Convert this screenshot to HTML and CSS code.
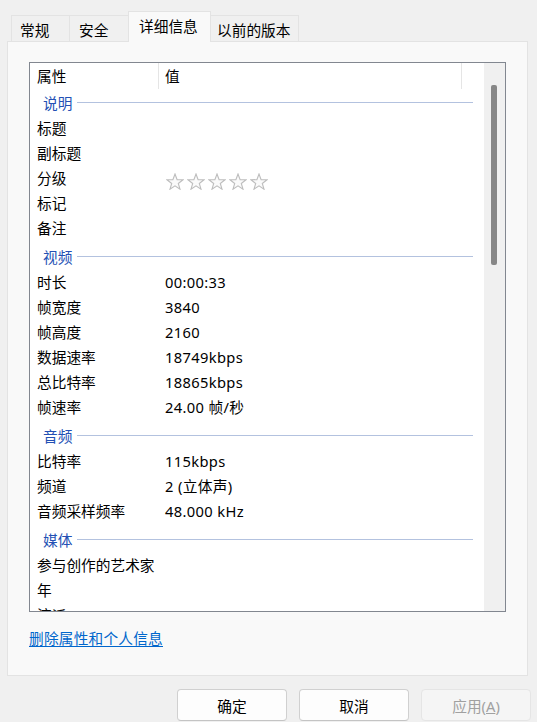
FILE: index.html
```html
<!DOCTYPE html>
<html lang="zh-CN">
<head>
<meta charset="utf-8">
<title>属性</title>
<link rel="stylesheet" href="styles.css">
</head>
<body>
<div class="dialog">
  <div class="tabs">
    <div class="tab t1">常规</div>
    <div class="tab t2">安全</div>
    <div class="tab t3 active">详细信息</div>
    <div class="tab t4">以前的版本</div>
  </div>
  <div class="panel">
    <div class="listbox">
      <div class="list">
        <div class="header">
          <div class="hcell hprop">属性</div>
          <div class="hcell hval">值</div>
        </div>
        <div class="section first"><span class="stitle">说明</span><span class="sline"></span></div>
        <div class="row"><span class="prop">标题</span><span class="val"></span></div>
        <div class="row"><span class="prop">副标题</span><span class="val"></span></div>
        <div class="row"><span class="prop">分级</span><span class="val stars">
          <svg class="star" viewBox="0 0 18 17"><polygon points="9,1 11.1,6.6 17,6.8 12.3,10.5 14,16.2 9,12.9 4,16.2 5.7,10.5 1,6.8 6.9,6.6"/></svg>
          <svg class="star" viewBox="0 0 18 17"><polygon points="9,1 11.1,6.6 17,6.8 12.3,10.5 14,16.2 9,12.9 4,16.2 5.7,10.5 1,6.8 6.9,6.6"/></svg>
          <svg class="star" viewBox="0 0 18 17"><polygon points="9,1 11.1,6.6 17,6.8 12.3,10.5 14,16.2 9,12.9 4,16.2 5.7,10.5 1,6.8 6.9,6.6"/></svg>
          <svg class="star" viewBox="0 0 18 17"><polygon points="9,1 11.1,6.6 17,6.8 12.3,10.5 14,16.2 9,12.9 4,16.2 5.7,10.5 1,6.8 6.9,6.6"/></svg>
          <svg class="star" viewBox="0 0 18 17"><polygon points="9,1 11.1,6.6 17,6.8 12.3,10.5 14,16.2 9,12.9 4,16.2 5.7,10.5 1,6.8 6.9,6.6"/></svg>
        </span></div>
        <div class="row"><span class="prop">标记</span><span class="val"></span></div>
        <div class="row"><span class="prop">备注</span><span class="val"></span></div>
        <div class="section"><span class="stitle">视频</span><span class="sline"></span></div>
        <div class="row"><span class="prop">时长</span><span class="val">00:00:33</span></div>
        <div class="row"><span class="prop">帧宽度</span><span class="val">3840</span></div>
        <div class="row"><span class="prop">帧高度</span><span class="val">2160</span></div>
        <div class="row"><span class="prop">数据速率</span><span class="val">18749kbps</span></div>
        <div class="row"><span class="prop">总比特率</span><span class="val">18865kbps</span></div>
        <div class="row"><span class="prop">帧速率</span><span class="val">24.00 帧/秒</span></div>
        <div class="section"><span class="stitle">音频</span><span class="sline"></span></div>
        <div class="row"><span class="prop">比特率</span><span class="val">115kbps</span></div>
        <div class="row"><span class="prop">频道</span><span class="val">2 (立体声)</span></div>
        <div class="row"><span class="prop">音频采样频率</span><span class="val">48.000 kHz</span></div>
        <div class="section"><span class="stitle">媒体</span><span class="sline"></span></div>
        <div class="row"><span class="prop">参与创作的艺术家</span><span class="val"></span></div>
        <div class="row"><span class="prop">年</span><span class="val"></span></div>
        <div class="row"><span class="prop">流派</span><span class="val"></span></div>
      </div>
      <div class="scrollbar"><div class="thumb"></div></div>
    </div>
    <a class="link" href="#">删除属性和个人信息</a>
  </div>
  <div class="buttons">
    <button class="btn">确定</button>
    <button class="btn">取消</button>
    <button class="btn disabled" disabled>应用(<u>A</u>)</button>
  </div>
</div>
</body>
</html>
```
FILE: styles.css
```css
* { box-sizing: border-box; }
html, body {
  margin: 0;
  padding: 0;
  background: #f0f0f0;
}
body {
  font-family: "Noto Sans", "Noto Sans CJK SC", sans-serif;
  font-size: 14.7px;
  color: #000;
  width: 537px;
  height: 722px;
  overflow: hidden;
}
.dialog {
  display: flex;
  flex-direction: column;
}
.tabs {
  display: flex;
  align-items: flex-end;
  height: 41px;
  padding-left: 11px;
}
.tab {
  height: 26px;
  line-height: 24px;
  padding-top: 2px;
  border: 1px solid #e3e3e3;
  border-bottom: none;
  background: #f0f0f0;
  white-space: nowrap;
}
.t1 { width: 59px; padding-left: 8px; }
.t2 { width: 60px; padding-left: 9px; margin-left: -1px; }
.t3 { width: 83px; padding-left: 10px; margin-left: -1px; }
.t4 { width: 89px; padding-left: 6px; margin-left: -1px; }
.tab.active {
  height: 31px;
  line-height: 28px;
  padding-top: 0;
  background: #f9f9f9;
  margin-bottom: -1px;
  position: relative;
  z-index: 1;
}
.panel {
  margin-left: 7px;
  width: 521px;
  height: 635px;
  border: 1px solid #e3e3e3;
  background: #f9f9f9;
  padding: 20px 0 0 21px;
  display: flex;
  flex-direction: column;
  align-items: flex-start;
}
.listbox {
  width: 477px;
  height: 550px;
  border: 1px solid #828790;
  background: #fff;
  display: flex;
}
.list {
  flex: 1;
  overflow: hidden;
}
.header {
  display: flex;
  height: 26px;
}
.hcell {
  height: 26px;
  line-height: 26px;
  border-right: 1px solid #e5e5e5;
}
.hprop { width: 129px; padding-left: 7px; }
.hval { width: 303px; padding-left: 6px; }
.section {
  display: flex;
  align-items: center;
  height: 29px;
  padding-top: 2px;
  padding-left: 13px;
  padding-right: 11px;
}
.section.first {
  height: 27px;
  padding-top: 0;
}
.stitle {
  color: #2350b4;
  line-height: 20px;
}
.sline {
  flex: 1;
  height: 1px;
  margin-left: 5px;
  background: #b3c2df;
}
.row {
  display: flex;
  height: 25px;
  line-height: 25px;
  white-space: nowrap;
}
.prop {
  width: 135px;
  padding-left: 7px;
}
.val {
  flex: 1;
  letter-spacing: 0.35px;
}
.stars {
  display: flex;
  gap: 3px;
  padding-top: 7px;
  padding-left: 1px;
  align-items: flex-start;
}
.star {
  width: 18px;
  height: 17px;
  display: block;
}
.star polygon {
  fill: #fafafa;
  stroke: #bdbdbd;
  stroke-width: 1.1;
  stroke-linejoin: miter;
}
.scrollbar {
  width: 21px;
  background: #f0f0f0;
  padding: 22px 8px 0 7px;
}
.thumb {
  width: 6px;
  height: 180px;
  background: #878787;
  border-radius: 2px;
}
.link {
  margin-top: 16px;
  line-height: 20px;
  color: #0066cc;
  text-decoration: underline;
  text-underline-offset: 2px;
  letter-spacing: 0.2px;
}
.buttons {
  display: flex;
  justify-content: flex-end;
  gap: 12px;
  padding-top: 13px;
  padding-right: 6px;
}
.btn {
  width: 110px;
  height: 32px;
  font-family: inherit;
  font-size: 14.7px;
  color: #000;
  background: #fdfdfd;
  border: 1px solid #d0d0d0;
  border-bottom-color: #c4c4c4;
  border-radius: 4px;
  padding: 0;
}
.btn.disabled {
  color: #a0a0a0;
  background: #f5f5f5;
  border-color: #e5e5e5;
}
```
